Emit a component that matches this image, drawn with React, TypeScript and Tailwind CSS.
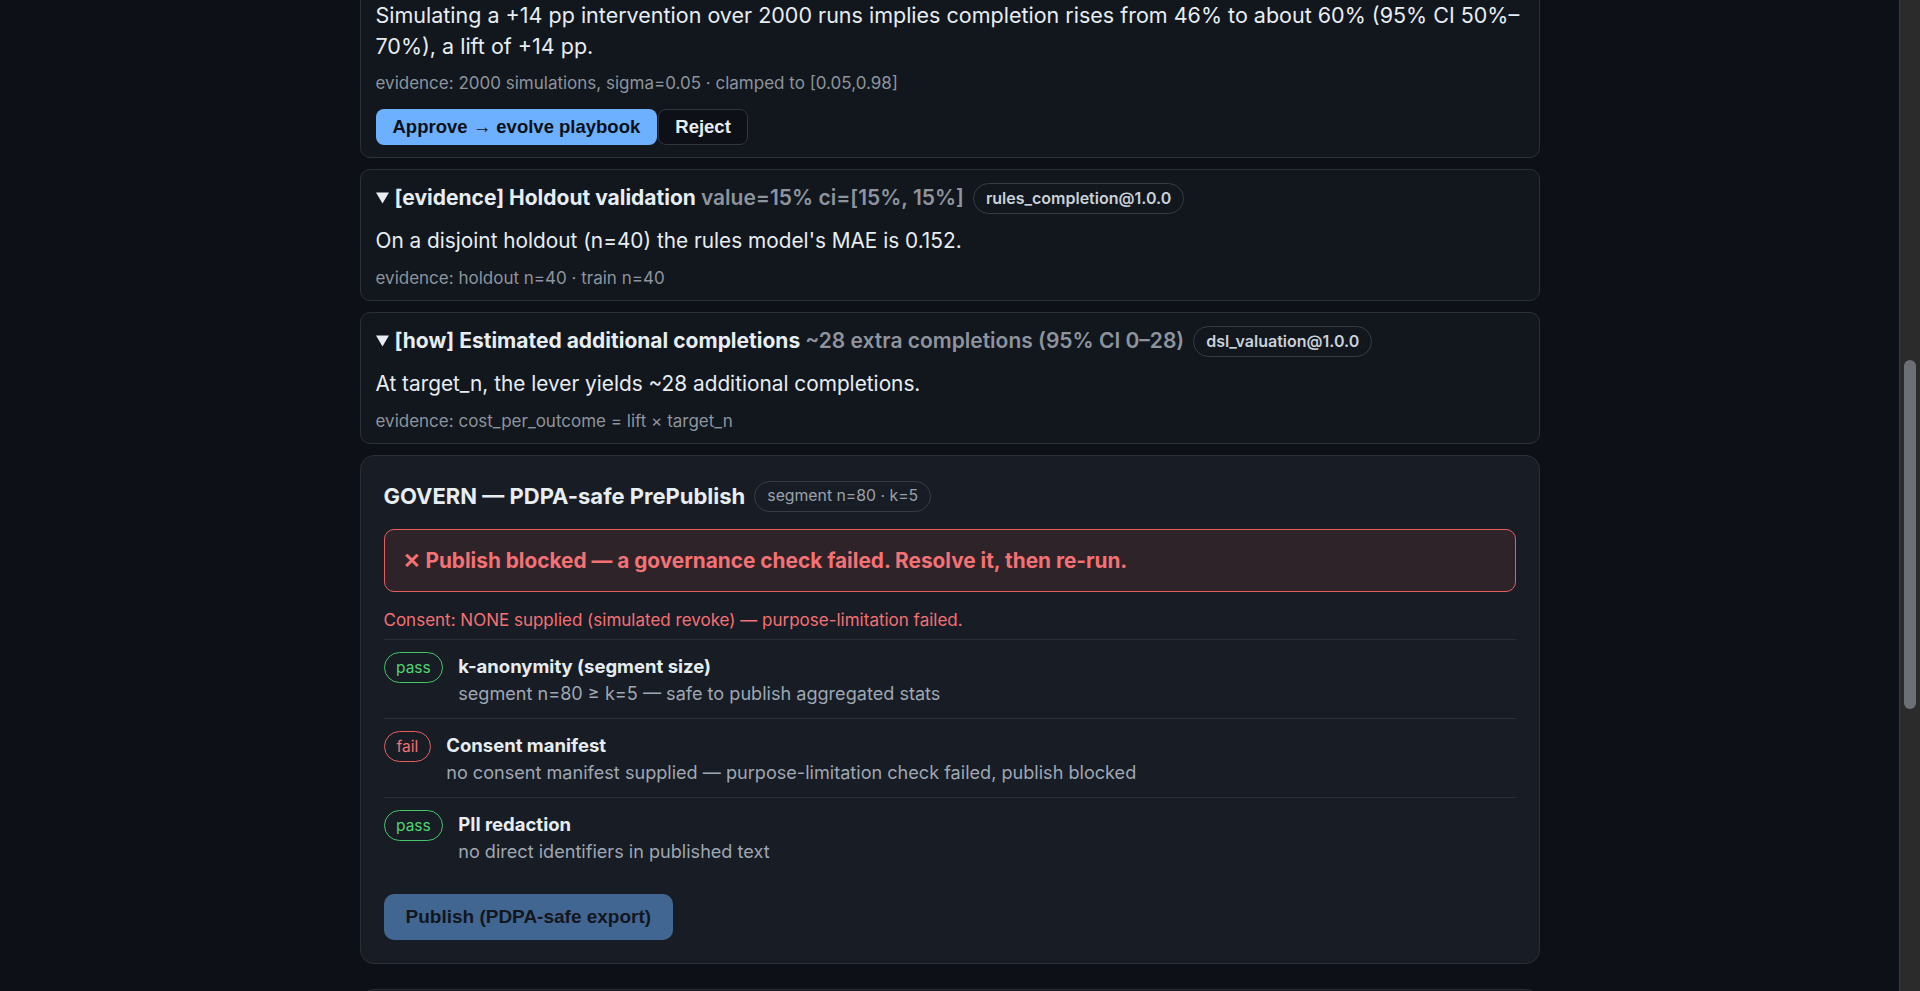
import React from "react";

const Tri = () => (
  <svg width="13" height="12" viewBox="0 0 13 12" className="shrink-0">
    <polygon points="0,0.5 13,0.5 6.5,11.5" fill="#e6edf3" />
  </svg>
);

const Pill = ({ children }: { children: React.ReactNode }) => (
  <span className="ml-[3px] inline-flex h-[31px] items-center rounded-full border border-[#363c45] px-3 text-[16px] font-semibold text-[#c9d1d9]">
    {children}
  </span>
);

const EvidenceCard = ({
  tag,
  title,
  value,
  pill,
  body,
  evidence,
}: {
  tag: string;
  title: string;
  value: string;
  pill: string;
  body: string;
  evidence: string;
}) => (
  <div className="rounded-[10px] border border-[#2b3038] bg-[#12161d] px-[15px] pb-[10px] pt-3">
    <div className="flex h-8 items-center gap-[6px]">
      <Tri />
      <span className="whitespace-nowrap text-[21px] font-bold text-[#e6edf3]">
        {tag} {title}{" "}
        <span className="font-semibold text-[#8d949e]">{value}</span>
      </span>
      <Pill>{pill}</Pill>
    </div>
    <p className="mt-3 text-[20.8px] leading-[30px] text-[#e6edf3]">{body}</p>
    <p className="mt-[10px] text-[17px] leading-6 text-[#8d949e]">{evidence}</p>
  </div>
);

const CheckRow = ({
  status,
  title,
  sub,
}: {
  status: "pass" | "fail";
  title: string;
  sub: string;
}) => (
  <div className="flex items-start gap-[15px] border-t border-[#2b3038] py-3">
    <span
      className={
        status === "pass"
          ? "inline-flex h-[31px] shrink-0 items-center rounded-full border border-[#45c468] px-[11.5px] text-[15.5px] text-[#52d273]"
          : "inline-flex h-[31px] shrink-0 items-center rounded-full border border-[#e5605d] px-[12px] text-[15.5px] text-[#f47174]"
      }
    >
      {status}
    </span>
    <div>
      <div className="text-[18.5px] font-bold leading-[28px] text-[#e6edf3]">{title}</div>
      <div className="text-[18.1px] leading-[26px] text-[#9ea7b3]">{sub}</div>
    </div>
  </div>
);

export default function App() {
  return (
    <div
      className="flex h-[991px] w-full overflow-hidden bg-[#0d1016]"
      style={{ fontFamily: "Inter, 'Noto Sans', sans-serif" }}
    >
      <div className="h-full flex-1 overflow-hidden">
        <div className="mx-auto -mt-[13px] flex w-[1180px] flex-col gap-[11px]">
          <div className="rounded-[10px] border border-[#2b3038] bg-[#12161d] px-[15px] pb-3 pt-3">
            <p className="text-[21.5px] leading-[30.6px] text-[#e6edf3]">
              <span className="whitespace-nowrap">
                Simulating a +14 pp intervention over 2000 runs implies completion rises from 46% to about 60% (95% CI 50%–
              </span>
              <br />
              70%), a lift of +14 pp.
            </p>
            <p className="mt-[10px] text-[17px] leading-6 text-[#8d949e]">
              evidence: 2000 simulations, sigma=0.05 · clamped to [0.05,0.98]
            </p>
            <div className="mt-[14px] flex gap-px" style={{ fontFamily: "'Liberation Sans', Arial, sans-serif" }}>
              <button className="h-9 rounded-[8px] bg-[#6cb0ff] px-[17px] text-[18.5px] font-bold text-[#0d1117]">
                Approve → evolve playbook
              </button>
              <button className="h-9 rounded-[8px] border border-[#30363d] bg-[#0d1117] px-[16px] text-[18.5px] font-bold text-[#e6edf3]">
                Reject
              </button>
            </div>
          </div>

          <EvidenceCard
            tag="[evidence]"
            title="Holdout validation"
            value="value=15% ci=[15%, 15%]"
            pill="rules_completion@1.0.0"
            body="On a disjoint holdout (n=40) the rules model's MAE is 0.152."
            evidence="evidence: holdout n=40 · train n=40"
          />

          <EvidenceCard
            tag="[how]"
            title="Estimated additional completions"
            value="~28 extra completions (95% CI 0–28)"
            pill="dsl_valuation@1.0.0"
            body="At target_n, the lever yields ~28 additional completions."
            evidence="evidence: cost_per_outcome = lift × target_n"
          />

          <div className="rounded-[14px] border border-[#2b3038] bg-[#181c24] px-[23px] pb-[23px] pt-6">
            <div className="flex h-8 items-center gap-[9px]">
              <span className="text-[22px] font-bold text-[#e6edf3]">GOVERN — PDPA-safe PrePublish</span>
              <span className="inline-flex h-[31px] items-center rounded-full border border-[#363c45] px-3 text-[15.8px] text-[#9aa1ab]">
                segment n=80 · k=5
              </span>
            </div>
            <div className="mt-[17px] flex h-[63px] items-center rounded-[10px] border-[1.5px] border-[#e5605d] bg-[#2e2329] pl-[18px] text-[20.8px] font-bold text-[#f47174]">
              ✕ Publish blocked — a governance check failed. Resolve it, then re-run.
            </div>
            <p className="mt-4 text-[17px] leading-6 text-[#f47174]">
              Consent: NONE supplied (simulated revoke) — purpose-limitation failed.
            </p>
            <div className="mt-[7px]">
              <CheckRow
                status="pass"
                title="k-anonymity (segment size)"
                sub="segment n=80 ≥ k=5 — safe to publish aggregated stats"
              />
              <CheckRow
                status="fail"
                title="Consent manifest"
                sub="no consent manifest supplied — purpose-limitation check failed, publish blocked"
              />
              <CheckRow status="pass" title="PII redaction" sub="no direct identifiers in published text" />
            </div>
            <button
              className="mt-[18px] h-[46px] rounded-[10px] bg-[#6cb0ff] px-[22px] text-[19px] font-bold text-[#0d1117] opacity-50"
              style={{ fontFamily: "'Liberation Sans', Arial, sans-serif" }}
            >
              Publish (PDPA-safe export)
            </button>
          </div>

          <div className="mt-[14px] h-40 rounded-[14px] border border-[#2b3038] bg-[#12161d]" />
        </div>
      </div>
      <div className="flex h-full w-[21px] shrink-0 flex-col border-l border-[#3a3a3c] bg-[#2b2b2c] px-[4px]">
        <div className="h-[360px] shrink-0" />
        <div className="h-[349px] w-[12px] shrink-0 rounded-full bg-[#6c6f75]" />
      </div>
    </div>
  );
}
